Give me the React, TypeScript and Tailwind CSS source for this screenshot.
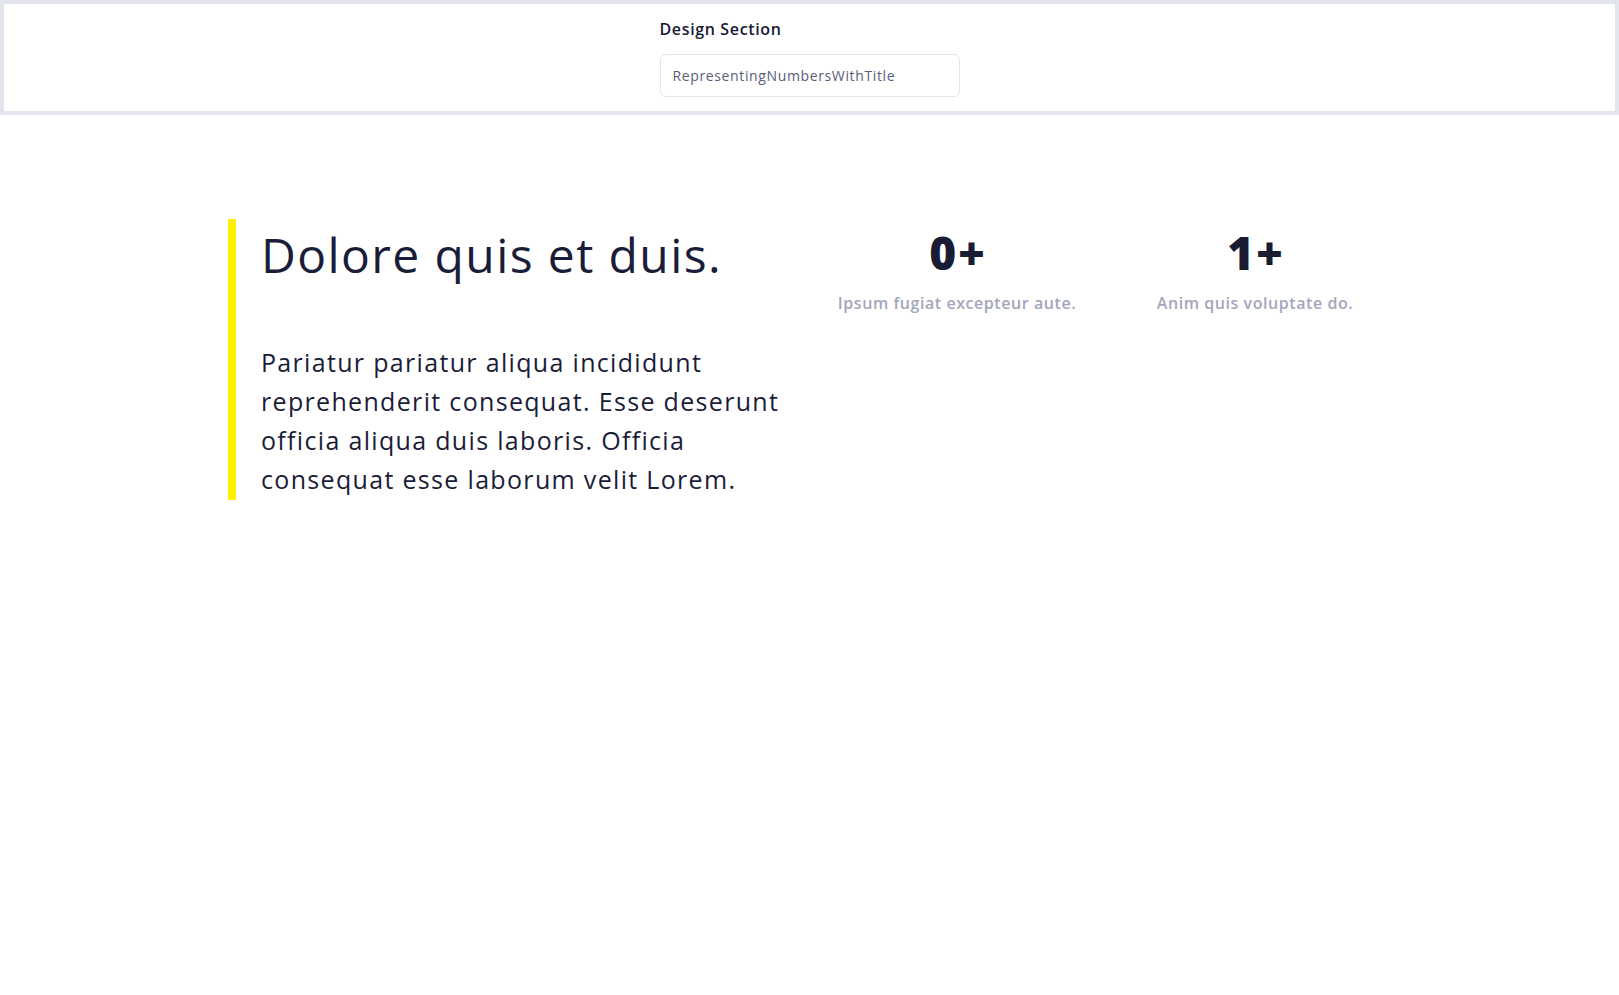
import React from "react";

const font = { fontFamily: '"Open Sans", "Noto Sans", sans-serif' };

function Stat({ value, label }: { value: string; label: string }) {
  return (
    <div className="w-[298px] flex flex-col items-center text-center">
      <div className="pl-[2px] text-[46px] leading-[67px] font-extrabold tracking-[0.04em] text-[#191c33]">{value}</div>
      <div className="mt-[5px] text-base leading-6 font-semibold tracking-[0.035em] text-[#a3a6bb]">{label}</div>
    </div>
  );
}

export default function App() {
  return (
    <div className="min-h-screen bg-white" style={font}>
      <header className="border-4 border-[#e3e5ec] bg-white">
        <div className="mx-auto w-[300px] pt-[13px] pb-[14px] flex flex-col gap-[13px]">
          <label className="text-base leading-6 font-semibold tracking-[0.04em] text-[#161a33]">Design Section</label>
          <div className="h-[43px] rounded-md border border-[#e4e5ec] flex items-center px-3 text-sm tracking-[0.045em] text-[#595e78]">
            RepresentingNumbersWithTitle
          </div>
        </div>
      </header>

      <main className="pl-[228px] pt-[104px] flex">
        <section className="w-[580px] flex">
          <div className="w-2 bg-[#fff000]" />
          <div className="pl-[25px] pb-[1px] text-[#1a1d38]">
            <h1 className="text-5xl leading-[72px] font-normal tracking-[1.4px]">Dolore quis et duis.</h1>
            <p className="mt-[52px] w-[540px] text-[25px] leading-[39px] tracking-[0.053em]">
              Pariatur pariatur aliqua incididunt reprehenderit consequat. Esse deserunt officia aliqua duis laboris. Officia consequat esse laborum velit Lorem.
            </p>
          </div>
        </section>
        <div className="flex">
          <Stat value="0+" label="Ipsum fugiat excepteur aute." />
          <Stat value="1+" label="Anim quis voluptate do." />
        </div>
      </main>
    </div>
  );
}
